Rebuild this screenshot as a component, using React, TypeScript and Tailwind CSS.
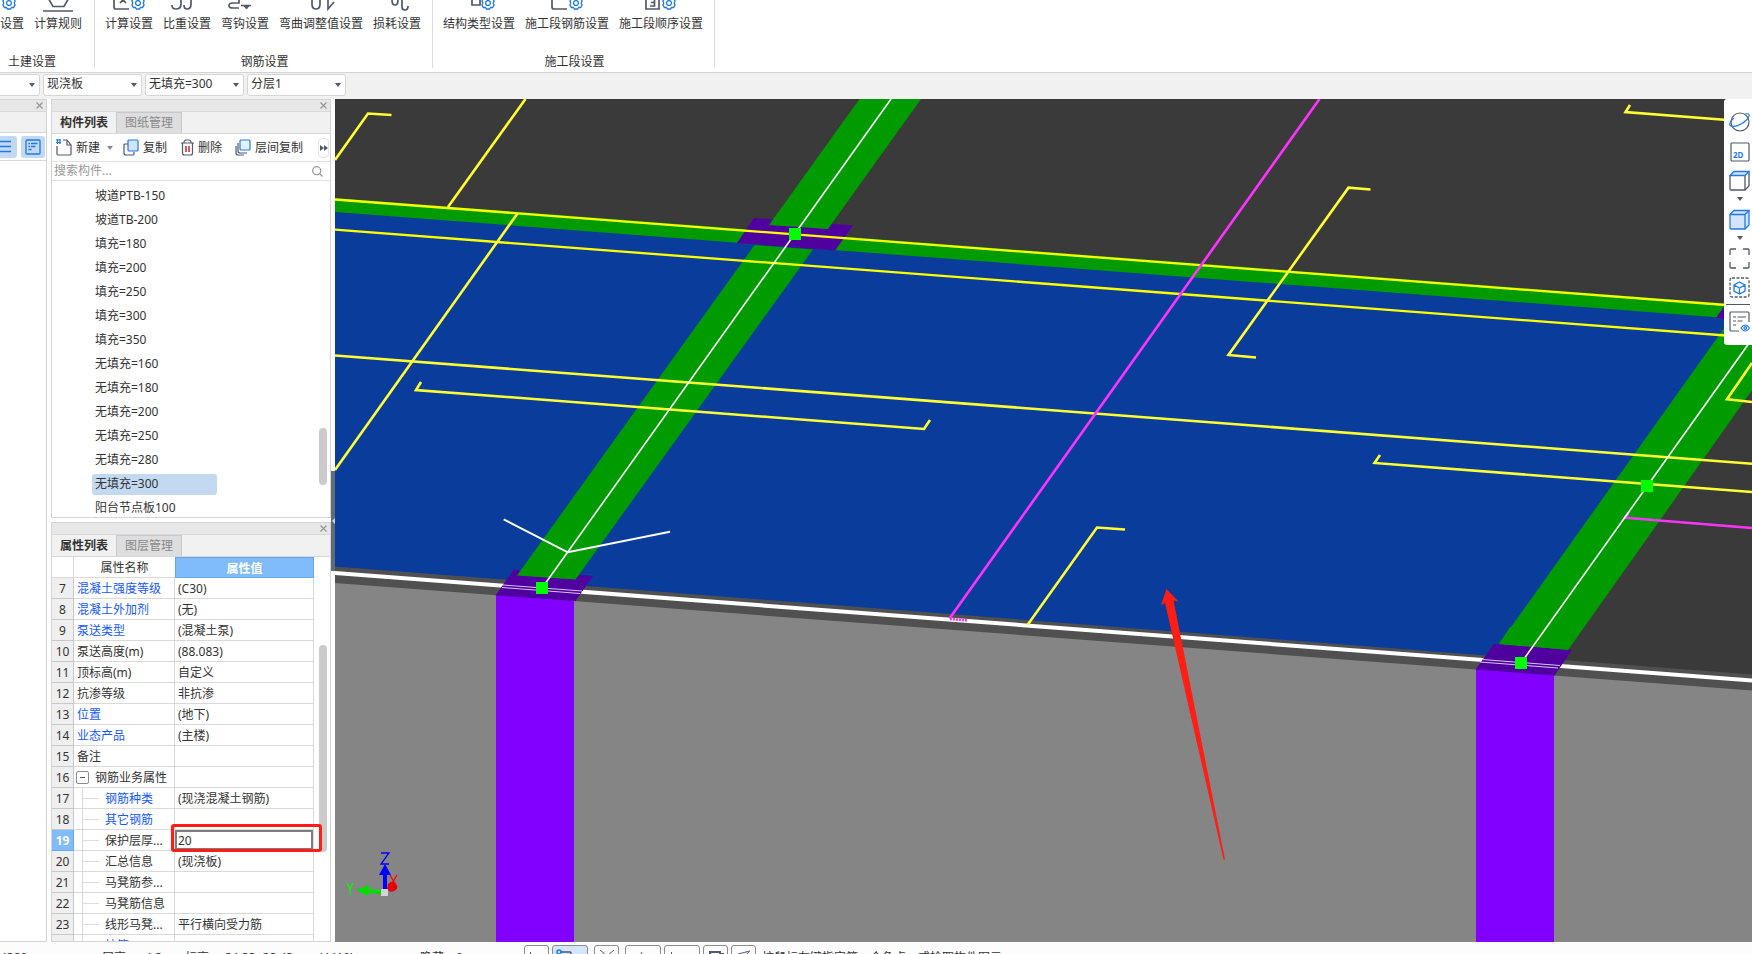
import { useState } from 'react';
import type { ReactNode } from 'react';
import clsx from 'clsx';

const COMPONENTS = [
  '坡道PTB-150',
  '坡道TB-200',
  '填充=180',
  '填充=200',
  '填充=250',
  '填充=300',
  '填充=350',
  '无填充=160',
  '无填充=180',
  '无填充=200',
  '无填充=250',
  '无填充=280',
  '无填充=300',
  '阳台节点板100',
];

type Prop = {
  no: number;
  name: string;
  value?: string;
  blue?: boolean;
  child?: boolean;
  group?: boolean;
  editing?: boolean;
};

const PROPS: Prop[] = [
  { no: 7, name: '混凝土强度等级', value: '(C30)', blue: true },
  { no: 8, name: '混凝土外加剂', value: '(无)', blue: true },
  { no: 9, name: '泵送类型', value: '(混凝土泵)', blue: true },
  { no: 10, name: '泵送高度(m)', value: '(88.083)' },
  { no: 11, name: '顶标高(m)', value: '自定义' },
  { no: 12, name: '抗渗等级', value: '非抗渗' },
  { no: 13, name: '位置', value: '(地下)', blue: true },
  { no: 14, name: '业态产品', value: '(主楼)', blue: true },
  { no: 15, name: '备注' },
  { no: 16, name: '钢筋业务属性', group: true },
  { no: 17, name: '钢筋种类', value: '(现浇混凝土钢筋)', blue: true, child: true },
  { no: 18, name: '其它钢筋', blue: true, child: true },
  { no: 19, name: '保护层厚...', value: '20', child: true, editing: true },
  { no: 20, name: '汇总信息', value: '(现浇板)', child: true },
  { no: 21, name: '马凳筋参...', child: true },
  { no: 22, name: '马凳筋信息', child: true },
  { no: 23, name: '线形马凳...', value: '平行横向受力筋', child: true },
  { no: 24, name: '拉筋', blue: true, child: true },
];

/* ---------- icons ---------- */

const INK = '#50586a';
const BLUE = '#1f7ae8';

function Gear({ x, y }: { x: number; y: number }) {
  return (
    <g transform={`translate(${x} ${y})`} fill="none" stroke={BLUE} strokeWidth="1.3">
      <path d="M-1.6-6h3.2l1 1.6 2-.1 1.5 2.6-.9 1.9.9 1.9-1.5 2.6-2-.1-1 1.6h-3.2l-1-1.6-2 .1-1.5-2.6.9-1.9-.9-1.9 1.5-2.6 2 .1z" />
      <circle r="2.4" />
    </g>
  );
}

// Ribbon icons sit on a 36x24 canvas whose lower edge is shared.
function RibbonIcon({ children }: { children: ReactNode }) {
  return (
    <svg width="36" height="24" viewBox="0 0 36 24" fill="none" stroke={INK} strokeWidth="1.7">
      {children}
    </svg>
  );
}

const ribbonGroups = [
  {
    title: '土建设置',
    width: 'w-[95px]',
    pad: 'pr-[12px] justify-end',
    titlePad: 'pr-[30px]',
    items: [
      {
        label: '计算设置',
        icon: (
          <RibbonIcon>
            <path d="M6 2v17q0 2 2 2h10" />
            <Gear x={27} y={15} />
          </RibbonIcon>
        ),
      },
      {
        label: '计算规则',
        icon: (
          <RibbonIcon>
            <path d="M7 8l6 10.500h11L30 8M3 23h30" />
          </RibbonIcon>
        ),
      },
    ],
  },
  {
    title: '钢筋设置',
    width: 'w-[338px]',
    pad: 'pl-[10px]',
    titlePad: 'pl-[2px]',
    items: [
      {
        label: '计算设置',
        icon: (
          <RibbonIcon>
            <path d="M3 2v17q0 2 2 2h13M9 9l6 6M15 9l-6 6" />
            <Gear x={27} y={15} />
          </RibbonIcon>
        ),
      },
      {
        label: '比重设置',
        icon: (
          <RibbonIcon>
            <path d="M12 4v12q0 5-5 5-4 0-4-4M22 4v12q0 5-4 5-3 0-3-4" />
          </RibbonIcon>
        ),
      },
      {
        label: '弯钩设置',
        icon: (
          <RibbonIcon>
            <path d="M12 12v3H6q-4 0-4 2.500T6 20h6M14 17.500h10" />
            <path d="M17 18h5l-2.500 3z" fill={INK} strokeWidth="1" />
          </RibbonIcon>
        ),
      },
      {
        label: '弯曲调整值设置',
        icon: (
          <RibbonIcon>
            <path d="M9 4v12q0 5 4 5t4-5V4M25 4v17l6-7" />
          </RibbonIcon>
        ),
      },
      {
        label: '损耗设置',
        icon: (
          <RibbonIcon>
            <path d="M13 12q0 5 3 5t3-5M23 4v15q0 3 3 3t3-4" />
          </RibbonIcon>
        ),
      },
    ],
  },
  {
    title: '施工段设置',
    width: 'w-[282px]',
    pad: 'pl-[10px]',
    titlePad: 'pl-[2px]',
    items: [
      {
        label: '结构类型设置',
        icon: (
          <RibbonIcon>
            <path d="M11 4v13h8V4" />
            <Gear x={27} y={15} />
          </RibbonIcon>
        ),
      },
      {
        label: '施工段钢筋设置',
        icon: (
          <RibbonIcon>
            <path d="M3 4v15q0 2 2 2h13" />
            <Gear x={27} y={15} />
          </RibbonIcon>
        ),
      },
      {
        label: '施工段顺序设置',
        icon: (
          <RibbonIcon>
            <path d="M3 4v17h13V4" />
            <path d="M7 11h4.500v7H7M8 14.500h3.500" />
            <Gear x={26} y={15} />
          </RibbonIcon>
        ),
      },
    ],
  },
];

const DocIcon = () => (
  <svg width="17" height="17" viewBox="0 0 17 17" fill="none" stroke={INK} strokeWidth="1.2">
    <path d="M1 7v8q0 1 1 1h12q1 0 1-1V6l-4-5H7M11 1v5h4" />
    <path d="M0 1h5M0 3.500h5M1.500 0v5M4 0v5" stroke={BLUE} />
  </svg>
);

const CopyIcon = () => (
  <svg width="17" height="17" viewBox="0 0 17 17" fill="none" stroke={INK} strokeWidth="1.2">
    <path d="M5 5H2Q1 5 1 6v8q0 2 2 2h7q1 0 1-1v-2" />
    <rect x="5" y="1" width="10" height="11" rx="1" fill="#d3e4fb" stroke={BLUE} />
  </svg>
);

const TrashIcon = () => (
  <svg width="15" height="17" viewBox="0 0 15 17" fill="none" stroke={INK} strokeWidth="1.2">
    <path d="M1 4h13M4 4q0-3 2-3h3q2 0 2 3M2.500 4v10q0 2 2 2h6q2 0 2-2V4" />
    <path d="M6 7v6M9 7v6" stroke="#e02020" strokeWidth="1.5" />
  </svg>
);

const LayerCopyIcon = () => (
  <svg width="17" height="17" viewBox="0 0 17 17" fill="none" stroke={INK} strokeWidth="1.2">
    <path d="M3 4v8q0 2 2 2h7M1 7v7q0 2 2 2h6" />
    <rect x="5" y="1" width="10" height="10" rx="1" fill="#e6f1fe" stroke={BLUE} />
  </svg>
);

const CloseX = () => (
  <svg width="7" height="7" viewBox="0 0 7 7" stroke="#969696" strokeWidth="1.2">
    <path d="M0.500 0.500l6 6M6.500 0.500l-6 6" />
  </svg>
);

const Caret = () => (
  <svg width="6" height="4" viewBox="0 0 6 4" fill="#50586a">
    <path d="M0 0h6L3 4z" />
  </svg>
);

/* ---------- shared pieces ---------- */

function Combo({ label, value }: { label: string; value: string }) {
  return (
    <label className="relative block h-[22px] w-[99px] shrink-0">
      <select
        aria-label={label}
        className="block h-full w-full appearance-none rounded-[3px] border border-[#d6d6d6] bg-white pb-[3px] pl-[3px] text-xs text-[#333]"
      >
        <option>{value}</option>
      </select>
      <span className="pointer-events-none absolute right-[5px] top-[9px]">
        <Caret />
      </span>
    </label>
  );
}

function PanelStrip() {
  return (
    <div className="flex h-3 shrink-0 items-center justify-end border-b border-[#d8d8d8] bg-[#e7e7e7] pr-[3px]">
      <button aria-label="关闭">
        <CloseX />
      </button>
    </div>
  );
}

function Tabs({ names }: { names: string[] }) {
  const [active, setActive] = useState(0);
  return (
    <div className="flex h-[22px] shrink-0 border-b border-[#d8d8d8] bg-[#f1f1f1]">
      {names.map((name, i) => (
        <button
          key={name}
          onClick={() => setActive(i)}
          className={clsx(
            'w-[65px] border-r border-[#c6c9cf] text-xs',
            i === active ? 'font-bold text-[#333]' : 'border-t bg-[#dedede] text-[#888]',
          )}
        >
          {name}
        </button>
      ))}
    </div>
  );
}

function Ribbon() {
  return (
    <header className="flex h-[73px] shrink-0 overflow-hidden border-b border-[#d4d4d4] bg-white">
      {ribbonGroups.map((g) => (
        <section
          key={g.title}
          className={clsx('flex h-[68px] shrink-0 flex-col border-r border-[#dcdcdc]', g.width)}
        >
          <div className={clsx('flex h-[33px] items-end gap-[10px]', g.pad)}>
            {g.items.map((it) => (
              <button key={it.label} className="flex shrink-0 flex-col items-center">
                {it.icon}
                <span className="mt-[3px] whitespace-nowrap text-xs leading-[18px]">
                  {it.label}
                </span>
              </button>
            ))}
          </div>
          <h2 className={clsx('mt-5 text-center text-xs leading-[18px]', g.titlePad)}>
            {g.title}
          </h2>
        </section>
      ))}
    </header>
  );
}

function ToolButton({ icon, children }: { icon: ReactNode; children: ReactNode }) {
  return (
    <button className="flex shrink-0 items-center gap-[3px] whitespace-nowrap text-xs">
      {icon}
      {children}
    </button>
  );
}

function ComponentPanel() {
  const [selected, setSelected] = useState('无填充=300');
  return (
    <section className="relative flex h-[419px] shrink-0 flex-col border border-[#d4d4d4] bg-white">
      <PanelStrip />
      <Tabs names={['构件列表', '图纸管理']} />
      <div className="flex h-7 shrink-0 items-center border-b border-[#e0e0e0] pl-1">
        <ToolButton icon={<DocIcon />}>新建</ToolButton>
        <span className="ml-[7px] mr-[10px] opacity-70">
          <Caret />
        </span>
        <div className="flex gap-[13px]">
          <ToolButton icon={<CopyIcon />}>复制</ToolButton>
          <ToolButton icon={<TrashIcon />}>删除</ToolButton>
          <ToolButton icon={<LayerCopyIcon />}>层间复制</ToolButton>
        </div>
        <button
          aria-label="更多"
          className="ml-auto mr-[1px] flex h-5 w-[11px] items-center justify-center rounded border border-[#e4e4e4]"
        >
          <svg
            className="shrink-0"
            width="8"
            height="6"
            viewBox="0 0 8 6"
            fill="#50586a"
          >
            <path d="M0 0l4 3-4 3zM4 0l4 3-4 3z" />
          </svg>
        </button>
      </div>
      <div className="flex h-[19px] shrink-0 items-center border-b border-[#e0e0e0] pl-[2px] pr-[7px]">
        <input
          aria-label="搜索构件"
          placeholder="搜索构件..."
          className="min-w-0 flex-1 text-xs outline-none placeholder:text-[#999]"
        />
        <svg width="11" height="11" viewBox="0 0 11 11" fill="none" stroke="#999" strokeWidth="1.3">
          <circle cx="4.700" cy="4.700" r="4" />
          <path d="M7.500 7.500L10.500 10.500" />
        </svg>
      </div>
      <ul className="min-h-0 flex-1 overflow-hidden pl-10 pt-[3px]">
        {COMPONENTS.map((name) => (
          <li key={name} className="flex h-6 items-center">
            <button
              onClick={() => setSelected(name)}
              className={clsx(
                'h-[21px] w-[125px] rounded-[3px] pl-[3px] text-left text-xs',
                name === selected && 'bg-[#c2d9f1]',
              )}
            >
              {name}
            </button>
          </li>
        ))}
      </ul>
      <div className="absolute right-[3px] top-[328px] h-[57px] w-2 rounded-full bg-[#cbcbcb]" />
    </section>
  );
}

function NameCell({ p }: { p: Prop }) {
  if (p.group) {
    return (
      <div className="flex items-center gap-[6px] pl-[2px]">
        <button
          aria-label="折叠"
          className="flex h-[13px] w-[13px] items-center justify-center rounded-[2px] border border-[#8c8c8c]"
        >
          <span className="h-px w-[5px] bg-[#555]" />
        </button>
        <span className="pt-[2px]">{p.name}</span>
      </div>
    );
  }
  if (p.child) {
    return (
      <div className="ml-2 flex h-full items-center border-l border-[#dcdcdc]">
        <span className="mr-[6px] h-px w-4 bg-[#dcdcdc]" />
        <span className="pt-[2px]">{p.name}</span>
      </div>
    );
  }
  return <div className="pl-[3px] pt-[2px]">{p.name}</div>;
}

function PropertyPanel() {
  const [cover, setCover] = useState('20');
  return (
    <section className="relative flex min-h-0 flex-1 flex-col overflow-hidden border border-[#d4d4d4] bg-white">
      <PanelStrip />
      <Tabs names={['属性列表', '图层管理']} />
      <div className="absolute right-[3px] top-[122px] h-[207px] w-2 rounded-full bg-[#cbcbcb]" />
      <div className="min-h-0 flex-1">
        <table className="w-[262px] table-fixed border-separate border-spacing-0 text-xs">
          <colgroup>
            <col className="w-[22px]" />
            <col className="w-[101px]" />
            <col />
          </colgroup>
          <thead>
            <tr className="h-[21px]">
              <th className="border-b border-r border-[#d9d9d9] p-0" />
              <th className="border-b border-[#d9d9d9] p-0 pt-[2px] font-normal">属性名称</th>
              <th className="border border-[#62a8ee] bg-[#80bbfb] p-0 pt-[2px] font-bold text-white">
                属性值
              </th>
            </tr>
          </thead>
          <tbody>
            {PROPS.map((p) => (
              <tr key={p.no} className="h-[21px]">
                <td
                  className={clsx(
                    'border-b border-r p-0 pt-[2px] text-center',
                    p.editing
                      ? 'border-[#62a8ee] bg-[#80bbfb] font-bold text-white'
                      : 'border-[#c8c8c8] bg-[#efefef]',
                  )}
                >
                  {p.no}
                </td>
                <td
                  className={clsx(
                    'h-[21px] whitespace-nowrap border-b border-r border-[#d9d9d9] p-0',
                    p.blue && 'text-[#1459ff]',
                  )}
                >
                  <NameCell p={p} />
                </td>
                <td className="border-b border-r border-[#d9d9d9] p-0">
                  {p.editing ? (
                    <div className="relative">
                      <input
                        aria-label={p.name}
                        value={cover}
                        onChange={(e) => setCover(e.target.value)}
                        className="block h-5 w-full border-2 border-[#7d7d7d] pl-[1px] text-xs outline-none"
                      />
                      <div className="pointer-events-none absolute -left-1 -right-[9px] -top-[6px] h-7 rounded-[3px] border-[3px] border-[#ff1d14]" />
                    </div>
                  ) : (
                    <div className="pl-[3px] pt-[2px]">{p.value}</div>
                  )}
                </td>
              </tr>
            ))}
          </tbody>
        </table>
      </div>
    </section>
  );
}

function SidePanel() {
  const box =
    'flex h-[22px] w-6 shrink-0 items-center justify-center rounded-[3px] bg-[#c2d9f1]';
  return (
    <aside className="flex w-[47px] shrink-0 flex-col overflow-hidden border border-l-0 border-[#d4d4d4] bg-white">
      <PanelStrip />
      <div className="h-[21px] shrink-0 border-b border-[#d8d8d8] bg-[#f1f1f1]" />
      <div className="flex h-7 shrink-0 items-center justify-end gap-1 border-b border-[#d8d8d8] pr-[1px]">
        <button aria-label="列表" className={box}>
          <svg width="12" height="13" viewBox="0 0 12 13" stroke={BLUE} strokeWidth="1.3">
            <path d="M1 1.500h11M1 6.500h11M1 11.500h11" />
          </svg>
        </button>
        <button aria-label="详情" className={box}>
          <svg width="16" height="16" viewBox="0 0 16 16" fill="none" stroke={BLUE} strokeWidth="1.3">
            <rect x="1" y="1" width="14" height="14" rx="1" />
            <path d="M3.500 4.500h1.500M6 4.500h6.500M3.500 7.500h1.500M6 7.500h4.500M3.500 10.500h3" />
          </svg>
        </button>
      </div>
    </aside>
  );
}

/* ---------- 3D view ---------- */

function Scene() {
  return (
    <svg
      className="block h-full w-full bg-[#3a3a3a]"
      viewBox="335 99 1417 843"
      preserveAspectRatio="xMinYMin slice"
      fill="none"
      role="img"
      aria-label="三维视图"
    >
      {/* ground */}
      <path d="M335 575L1752 683V942H335z" fill="#858585" />
      <path d="M335 566L1752 674.500V690.500L335 583z" fill="#505050" />
      {/* slab */}
      <path d="M335 211L1735 318L1499 656.500L335 566.500z" fill="#0a3c9b" />
      {/* beams */}
      <path d="M335 198L1752 305.500V320L335 212z" fill="#009b00" />
      <path d="M335 573L1752 680.500" stroke="#fff" strokeWidth="4" />
      <path d="M1716 318l9-13 40 3-17 13z" fill="#50009f" />
      <path d="M1732 317L1804 317L1568 650L1499 644z" fill="#009b00" />
      <path d="M754 218L853 225.500L835 250.500L737 243z" fill="#50009f" />
      <path d="M859.500 99H921L828 229L769 225z" fill="#009b00" />
      {/* columns */}
      <path d="M496 595h78v347h-78zM1476 669h78v273h-78z" fill="#8200ff" />
      <path d="M514 569.500L593 576L575.500 601L495.500 595.500z" fill="#50009f" />
      <path d="M1494 644L1572 650L1554.500 675.500L1475.500 669.500z" fill="#50009f" />
      <path d="M754.500 245L813 249.500L575.500 579.500L517 575.500z" fill="#009b00" />
      <path d="M1510 627L1580 632L1567.700 649.700L1499 644z" fill="#009b00" />
      <path
        d="M503 585L582 591M502 587.500L580 593.500M1482 659.500L1560 665.500M1480 662L1558 668"
        stroke="#d9c4f2"
        strokeWidth="1"
      />

      {/* rebar */}
      <g stroke="#ffff00" strokeWidth="2.3">
        <path d="M335 199.500L1752 307" />
        <path d="M335 229.700L1752 337.500" />
      </g>
      <g stroke="#ffff33" strokeWidth="2.6">
        <path d="M335 160L368 113.500L391.500 115" />
        <path d="M525.500 99L448 207" />
        <path d="M517.500 213.500L335 470" />
        <path d="M335 355.500L1752 463.700" />
        <path d="M421 382L416 390L924 429L930 420" />
        <path d="M1380 455L1374.500 463L1752 492" />
        <path d="M1370.500 189.500L1348.500 187.700L1228.500 355L1256 357.500" />
        <path d="M1125 529.500L1097 527.500L1027.500 625" />
        <path d="M1630 105L1625.500 112L1724 119.700H1752" />
        <path d="M1752 363L1727 399.300L1752 402" />
      </g>
      <g stroke="#ff33ff" strokeWidth="2.6">
        <path d="M1319.500 99L949.500 618.500" />
        <path d="M1628.500 512.700L1625 517.700L1752 528" />
        <path d="M950 619l18 1.500" strokeDasharray="2 1" />
      </g>

      {/* axes */}
      <g stroke="#fff" strokeWidth="1.600">
        <path d="M891 99L541.700 588.500" />
        <path d="M1752 339L1521.300 662.700" />
        <path d="M503.700 519.300L567.700 552.300L670 531.700" strokeWidth="2" />
      </g>
      <g fill="#00ff00">
        <rect x="789" y="228" width="12" height="12" />
        <rect x="536" y="582" width="12" height="12" />
        <rect x="1641" y="480" width="12" height="12" />
        <rect x="1515" y="657" width="12" height="12" />
      </g>

      {/* callout arrow */}
      <path
        d="M1166.500 589L1161 605L1165 603L1223.500 859.500L1225 859.500L1173.500 600.500L1178.500 601.500z"
        fill="#ff1d14"
      />

      {/* view axis */}
      <path d="M388 884q5-5 8 0t-2 7-7-2z" fill="#e00000" />
      <path d="M390 875l7 12M397 875l-7 12" stroke="#ff0000" strokeWidth="1.3" />
      <path d="M383 889v-14h-4l6-11 6 11h-4v14z" fill="#0000ff" />
      <path d="M381 890l-12-1v-4l-13 5 12 6v-3l13 1z" fill="#00dd00" />
      <path d="M381 853h8l-8 11h8" stroke="#0000ff" strokeWidth="1.3" />
      <path d="M347 883l3 6 3-6M350 889v6" stroke="#00ff00" strokeWidth="1.3" />
      <rect x="381" y="889" width="7" height="7" fill="#d4d4d4" />
    </svg>
  );
}

function ViewTools() {
  const btn = 'flex h-[21px] w-[21px] items-center justify-center';
  return (
    <nav
      aria-label="视图工具"
      className="absolute right-0 top-0 flex h-[246px] w-7 flex-col items-end rounded-l-[3px] bg-white pr-[2px] pt-[13px]"
    >
      <button aria-label="动态观察" className={btn}>
        <svg width="21" height="21" viewBox="0 0 21 21" fill="none" stroke={INK} strokeWidth="1.2">
          <circle cx="11" cy="10" r="9" />
          <path d="M16 2q5-1 4 2-1 4-8 8T1 13.500Q0 10 5 6" stroke={BLUE} />
        </svg>
      </button>
      <button aria-label="二维" className={clsx(btn, 'mt-2')}>
        <svg width="20" height="20" viewBox="0 0 20 20" fill="none" stroke={INK} strokeWidth="1.2">
          <rect x="1" y="1" width="18" height="18" rx="1" />
          <text
            x="3"
            y="16"
            fontSize="8"
            fontWeight="bold"
            fontFamily="Noto Sans, sans-serif"
            fill={BLUE}
            stroke="none"
          >
            2D
          </text>
        </svg>
      </button>
      <button aria-label="线框" className={clsx(btn, 'mt-2')}>
        <svg width="21" height="21" viewBox="0 0 21 21" fill="none" stroke={INK} strokeWidth="1.3">
          <path d="M1 6v13q0 1 1 1h14V5.500M16 20l4-4V2" />
          <path d="M1 5.500L5 1.500h15l-4 4z" fill="#d3e4fb" stroke={BLUE} />
        </svg>
      </button>
      <span className="mr-[7px] mt-[6px]">
        <Caret />
      </span>
      <button aria-label="实体" className={clsx(btn, 'mt-2')}>
        <svg width="21" height="21" viewBox="0 0 21 21" stroke={BLUE} strokeWidth="1.3">
          <path d="M1 5.500L5 1.500h15V16l-4 4H2q-1 0-1-1z" fill="#d3e4fb" />
          <path d="M1 5.500h15V20M16 5.500l4-4" fill="none" />
        </svg>
      </button>
      <span className="mr-[7px] mt-[6px]">
        <Caret />
      </span>
      <button aria-label="全屏" className={clsx(btn, 'mt-2')}>
        <svg width="21" height="21" viewBox="0 0 21 21" fill="none" stroke={INK} strokeWidth="1.3">
          <path d="M1 7V2q0-1 1-1h5M14 1h5q1 0 1 1v5M20 14v5q0 1-1 1h-5M7 20H2q-1 0-1-1v-5" />
        </svg>
      </button>
      <button aria-label="局部三维" className={clsx(btn, 'mt-2')}>
        <svg width="21" height="21" viewBox="0 0 21 21" fill="none" stroke={INK} strokeWidth="1.3">
          <rect x="1" y="1" width="19" height="19" rx="2" strokeDasharray="3 1.5" />
          <path d="M10.500 5l5.500 3v6l-5.500 3L5 14V8zM5 8l5.500 3L16 8M10.500 11v6" stroke={BLUE} />
        </svg>
      </button>
      <hr className="mt-[6px] w-6 border-[#50586a]" />
      <button aria-label="显示设置" className={clsx(btn, 'mt-[6px]')}>
        <svg width="21" height="21" viewBox="0 0 21 21" fill="none" stroke={INK} strokeWidth="1.2">
          <path d="M10 20H2q-1 0-1-1V2q0-1 1-1h17q1 0 1 1v9" />
          <path d="M4 6h3M8.500 6H17M4 10h3M8.500 10h5M4 14h3" />
          <path d="M12 17q4-6 8.500 0-4.500 6-8.500 0z" stroke={BLUE} />
          <circle cx="16.300" cy="17" r="1.300" stroke={BLUE} />
        </svg>
      </button>
    </nav>
  );
}

function StatusBar() {
  const btn = 'flex h-[21px] shrink-0 justify-center rounded-[3px] border border-[#8c8c8c]';
  return (
    <footer className="h-3 shrink-0 overflow-hidden bg-[#fcfcfc]">
      <div className="flex h-[34px] items-start pt-[3px] text-xs">
        <div className="flex w-[524px] shrink-0 whitespace-pre pt-1 leading-[18px]">
          <span className="w-[102px]">4380</span>
          <span className="w-[43px]">层高：</span>
          <span className="w-10">4.2</span>
          <span className="w-10">标高：</span>
          <span className="w-[94px]">24.33~28.43</span>
          <span className="w-[101px]">(4410)</span>
          <span>隐藏：0</span>
        </div>
        <div className="flex items-start gap-[3px]">
          <button aria-label="正交" className={clsx(btn, 'w-[25px]')}>
            <svg width="16" height="18" viewBox="0 0 16 18" fill="none" stroke={INK}>
              <path d="M1.500 6v8H12" />
            </svg>
          </button>
          <button
            aria-label="对象捕捉"
            className={clsx(btn, 'w-9 border-[#2f86e8] bg-[#d3e4fb]')}
          >
            <svg width="30" height="18" viewBox="0 0 30 18" fill="none" stroke={INK} strokeWidth="1.5">
              <circle cx="4" cy="6" r="2" stroke={BLUE} />
              <path d="M6 6h9q1 0 1 1v6" />
            </svg>
          </button>
          <button aria-label="交点" className={clsx(btn, 'ml-[3px] w-[25px]')}>
            <svg width="18" height="18" viewBox="0 0 18 18" fill="none" stroke={INK}>
              <path d="M2 4l12 10M16 4L4 14" />
            </svg>
          </button>
          <button aria-label="垂点" className={clsx(btn, 'ml-[3px] w-9')}>
            <svg width="18" height="18" viewBox="0 0 18 18" fill="none" stroke={INK}>
              <path d="M8 6L3 15" />
            </svg>
          </button>
          <button aria-label="中点" className={clsx(btn, 'w-9')}>
            <svg width="24" height="18" viewBox="0 0 24 18" fill="none" stroke={INK}>
              <path d="M1.500 6v8H18" />
            </svg>
          </button>
          <button aria-label="顶点" className={clsx(btn, 'w-[25px]')}>
            <svg width="18" height="18" viewBox="0 0 18 18" fill="none" stroke={INK}>
              <path d="M3 6h10v9H3zM13 8h3v7" strokeWidth="2" />
            </svg>
          </button>
          <button aria-label="坐标" className={clsx(btn, 'w-[25px]')}>
            <svg width="18" height="18" viewBox="0 0 18 18" fill="none" stroke={INK}>
              <path d="M3 8l12-3M14 6L4 15" />
            </svg>
          </button>
        </div>
        <p className="ml-[6px] whitespace-nowrap pt-1 leading-[18px]">
          按鼠标左键指定第一个角点，或拾取构件图元
        </p>
      </div>
    </footer>
  );
}

export default function App() {
  return (
    <div className="flex h-screen flex-col overflow-hidden bg-white font-['Noto_Sans','Noto_Sans_CJK_SC',sans-serif] text-[#333]">
      <Ribbon />
      <div className="flex h-[26px] shrink-0 overflow-hidden bg-[#f1f1f1] pt-[1px]">
        <div className="-ml-[59px] flex gap-[3px]">
          <Combo label="构件类别" value="板" />
          <Combo label="构件类型" value="现浇板" />
          <Combo label="构件" value="无填充=300" />
          <Combo label="分层" value="分层1" />
        </div>
      </div>
      <main className="flex min-h-0 flex-1">
        <SidePanel />
        <div className="ml-1 flex w-[280px] shrink-0 flex-col gap-1">
          <ComponentPanel />
          <PropertyPanel />
        </div>
        <div className="flex w-1 shrink-0 flex-col pt-[372px]">
          <button
            aria-label="收起面板"
            className="flex h-[100px] w-full items-center justify-end bg-[#5f6c76]"
          >
            <svg width="3" height="6" viewBox="0 0 3 6" fill="#d0d4d8">
              <path d="M3 0v6L0 3z" />
            </svg>
          </button>
        </div>
        <div className="relative min-w-0 flex-1">
          <Scene />
          <ViewTools />
        </div>
      </main>
      <StatusBar />
    </div>
  );
}
